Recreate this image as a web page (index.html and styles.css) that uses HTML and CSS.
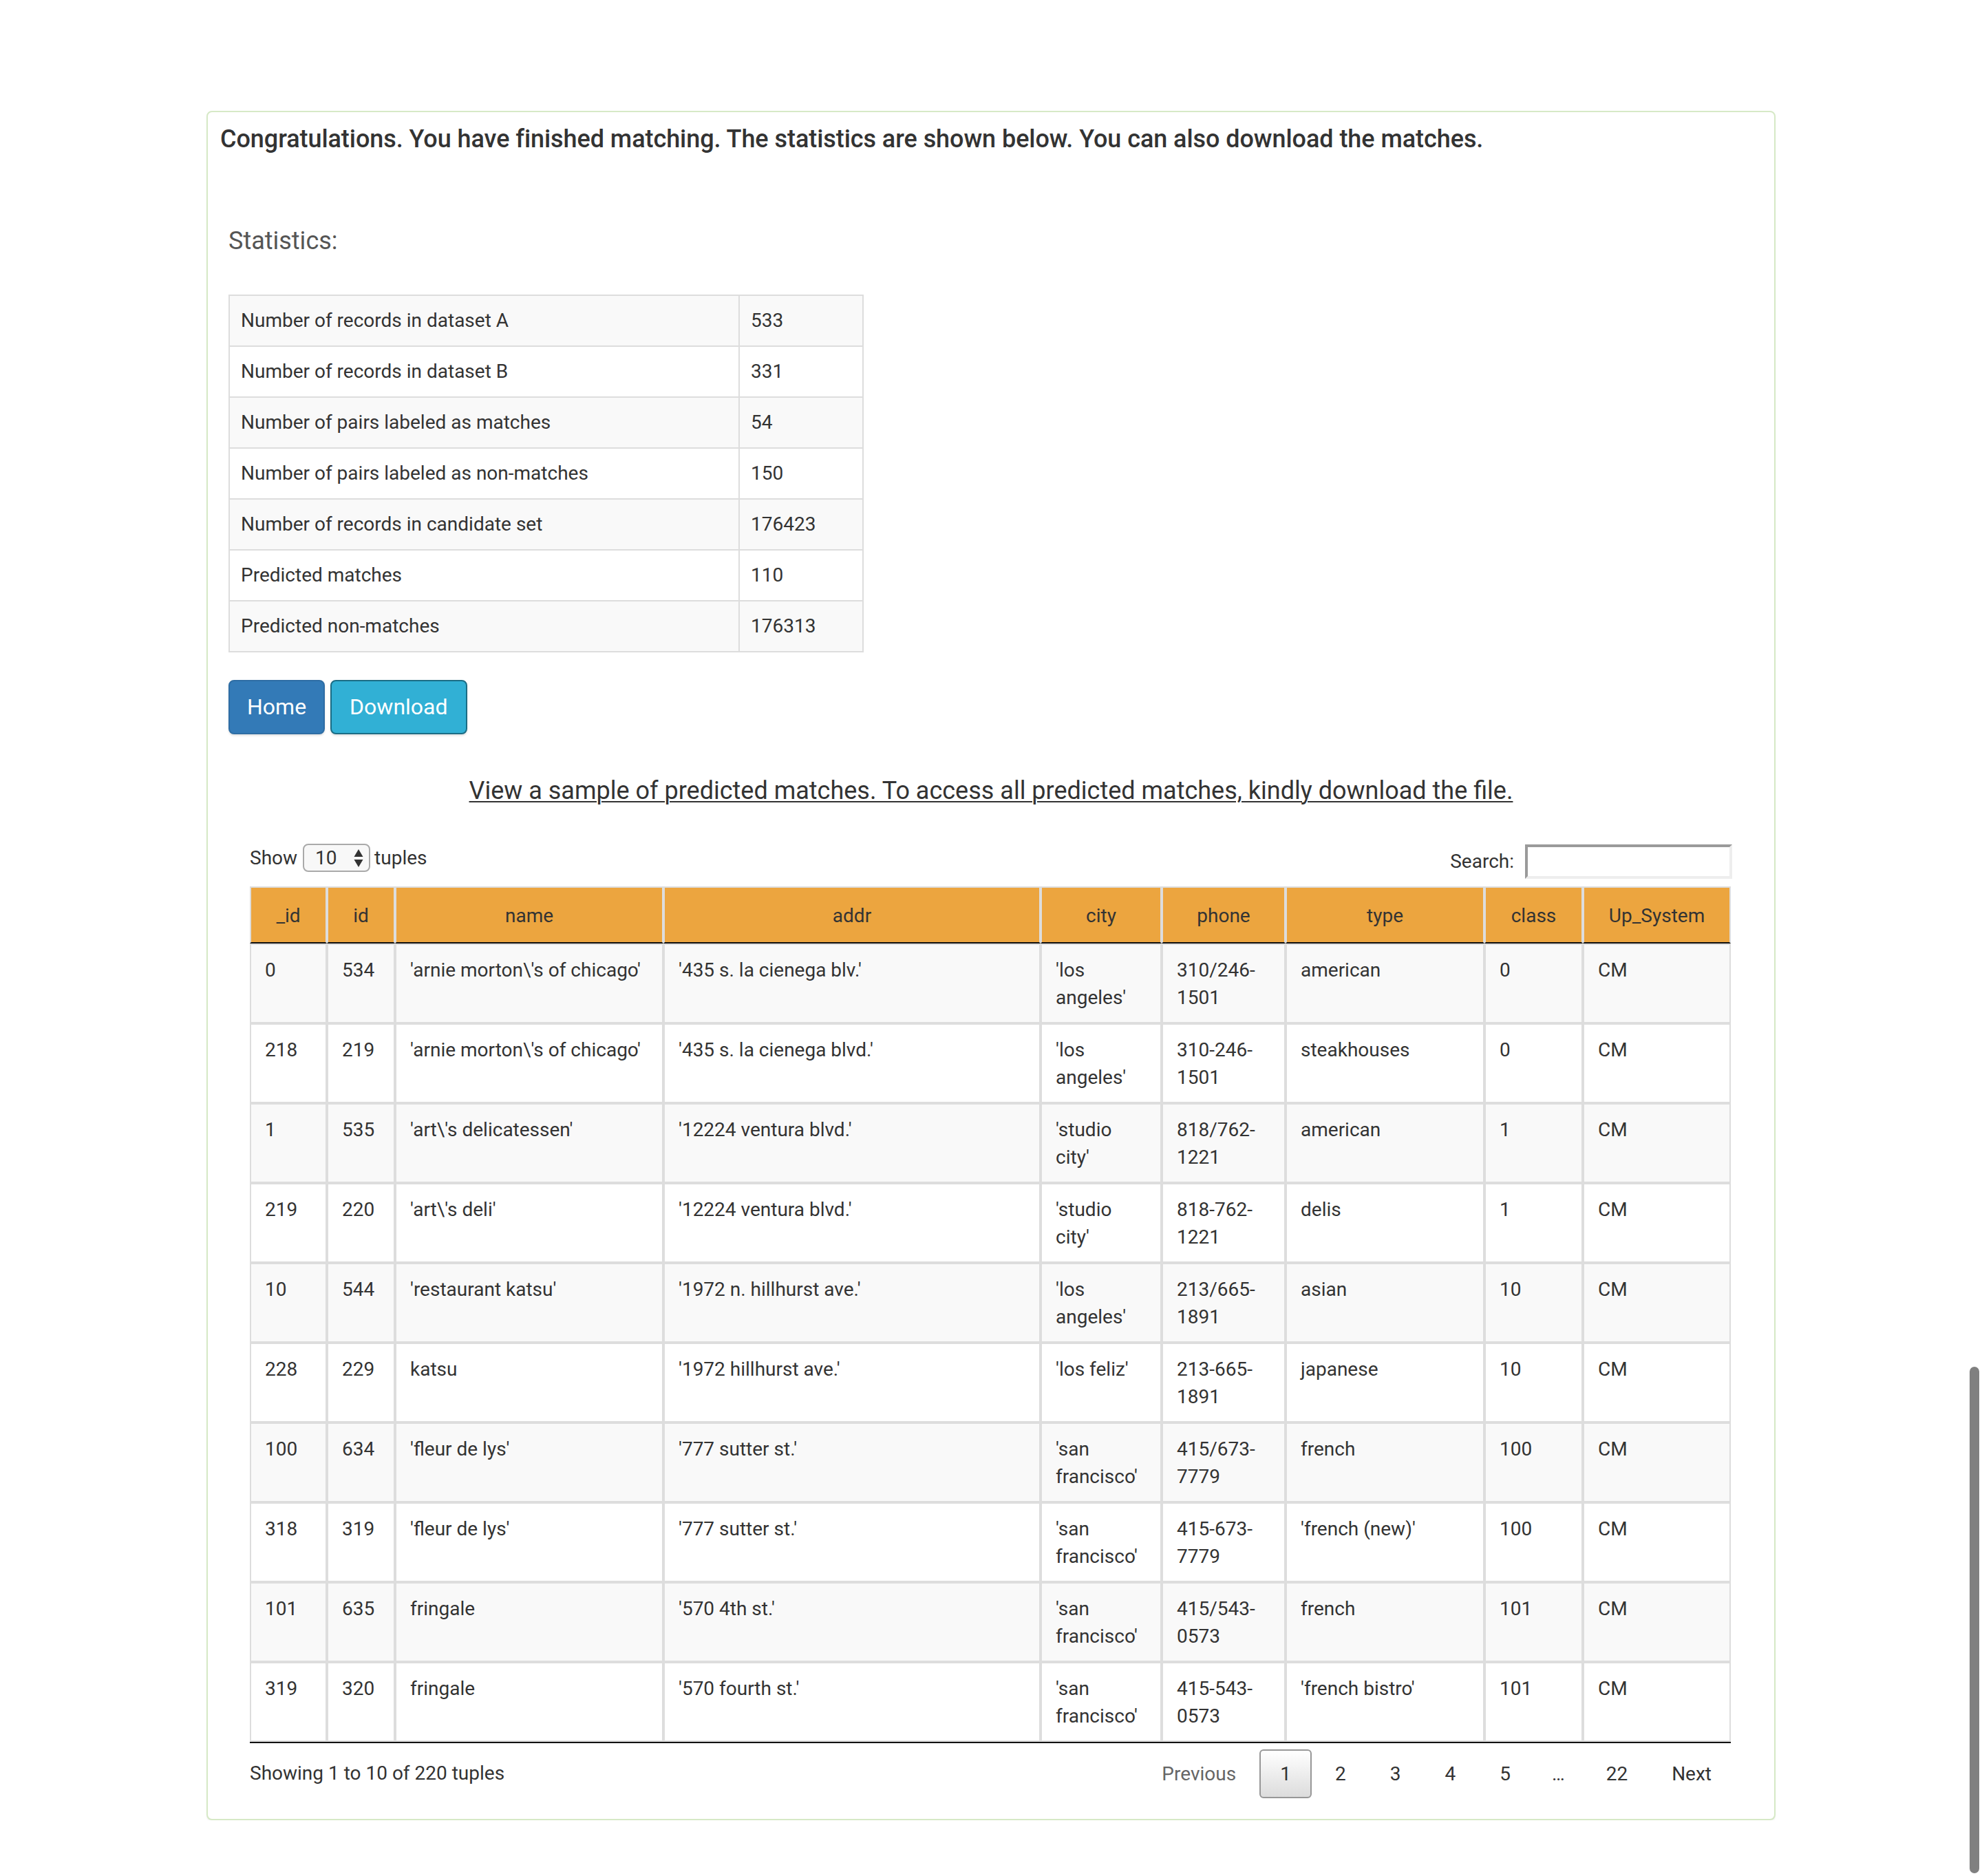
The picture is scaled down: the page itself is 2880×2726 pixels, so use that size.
FILE: index.html
```html
<!DOCTYPE html>
<html lang="en">
<head>
<meta charset="utf-8">
<title>Matching results</title>
<link rel="stylesheet" href="styles.css">
</head>
<body>
<div class="container">
  <div class="panel">
    <h4 class="congrats">Congratulations. You have finished matching. The statistics are shown below. You can also download the matches.</h4>
    <div class="panel-body">
      <h4 class="stats-title">Statistics:</h4>
      <table class="stats">
        <colgroup><col class="stats-c1"><col class="stats-c2"></colgroup>
        <tbody>
          <tr><td>Number of records in dataset A</td><td>533</td></tr>
          <tr><td>Number of records in dataset B</td><td>331</td></tr>
          <tr><td>Number of pairs labeled as matches</td><td>54</td></tr>
          <tr><td>Number of pairs labeled as non-matches</td><td>150</td></tr>
          <tr><td>Number of records in candidate set</td><td>176423</td></tr>
          <tr><td>Predicted matches</td><td>110</td></tr>
          <tr><td>Predicted non-matches</td><td>176313</td></tr>
        </tbody>
      </table>
      <div class="actions">
        <a class="btn btn-primary" href="#">Home</a>
        <a class="btn btn-info" href="#">Download</a>
      </div>
      <p class="sample"><a href="#">View a sample of predicted matches. To access all predicted matches, kindly download the file.</a></p>
      <div class="dt-wrapper">
        <div class="dt-top">
          <label class="dt-length">Show
            <span class="select-wrap">
              <select class="dt-select"><option>10</option><option>25</option><option>50</option><option>100</option></select>
              <svg class="select-arrows" width="14" height="28" viewBox="0 0 14 28"><path d="M7 1 L13.5 12 L0.5 12 Z" fill="#333"/><path d="M7 27 L13.5 16 L0.5 16 Z" fill="#333"/></svg>
            </span>
            tuples</label>
          <label class="dt-filter">Search:<input type="search" class="dt-search"></label>
        </div>
        <table class="data">
          <colgroup>
            <col class="w-uid"><col class="w-id"><col class="w-name"><col class="w-addr"><col class="w-city"><col class="w-phone"><col class="w-type"><col class="w-class"><col class="w-sys">
          </colgroup>
          <thead>
            <tr><th>_id</th><th>id</th><th>name</th><th>addr</th><th>city</th><th>phone</th><th>type</th><th>class</th><th>Up_System</th></tr>
          </thead>
          <tbody>
            <tr class="odd"><td>0</td><td>534</td><td>'arnie morton\'s of chicago'</td><td>'435 s. la cienega blv.'</td><td>'los angeles'</td><td>310/246-1501</td><td>american</td><td>0</td><td>CM</td></tr>
            <tr class="even"><td>218</td><td>219</td><td>'arnie morton\'s of chicago'</td><td>'435 s. la cienega blvd.'</td><td>'los angeles'</td><td>310-246-1501</td><td>steakhouses</td><td>0</td><td>CM</td></tr>
            <tr class="odd"><td>1</td><td>535</td><td>'art\'s delicatessen'</td><td>'12224 ventura blvd.'</td><td>'studio city'</td><td>818/762-1221</td><td>american</td><td>1</td><td>CM</td></tr>
            <tr class="even"><td>219</td><td>220</td><td>'art\'s deli'</td><td>'12224 ventura blvd.'</td><td>'studio city'</td><td>818-762-1221</td><td>delis</td><td>1</td><td>CM</td></tr>
            <tr class="odd"><td>10</td><td>544</td><td>'restaurant katsu'</td><td>'1972 n. hillhurst ave.'</td><td>'los angeles'</td><td>213/665-1891</td><td>asian</td><td>10</td><td>CM</td></tr>
            <tr class="even"><td>228</td><td>229</td><td>katsu</td><td>'1972 hillhurst ave.'</td><td>'los feliz'</td><td>213-665-1891</td><td>japanese</td><td>10</td><td>CM</td></tr>
            <tr class="odd"><td>100</td><td>634</td><td>'fleur de lys'</td><td>'777 sutter st.'</td><td>'san francisco'</td><td>415/673-7779</td><td>french</td><td>100</td><td>CM</td></tr>
            <tr class="even"><td>318</td><td>319</td><td>'fleur de lys'</td><td>'777 sutter st.'</td><td>'san francisco'</td><td>415-673-7779</td><td>'french (new)'</td><td>100</td><td>CM</td></tr>
            <tr class="odd"><td>101</td><td>635</td><td>fringale</td><td>'570 4th st.'</td><td>'san francisco'</td><td>415/543-0573</td><td>french</td><td>101</td><td>CM</td></tr>
            <tr class="even"><td>319</td><td>320</td><td>fringale</td><td>'570 fourth st.'</td><td>'san francisco'</td><td>415-543-0573</td><td>'french bistro'</td><td>101</td><td>CM</td></tr>
          </tbody>
        </table>
        <div class="dt-bottom">
          <div class="dt-info">Showing 1 to 10 of 220 tuples</div>
          <div class="dt-paginate">
            <a class="pg disabled" href="#">Previous</a>
            <a class="pg current" href="#">1</a>
            <a class="pg" href="#">2</a>
            <a class="pg" href="#">3</a>
            <a class="pg" href="#">4</a>
            <a class="pg" href="#">5</a>
            <span class="pg ellipsis">…</span>
            <a class="pg" href="#">22</a>
            <a class="pg" href="#">Next</a>
          </div>
        </div>
      </div>
    </div>
  </div>
</div>
<div class="scroll-thumb"></div>
</body>
</html>
```

FILE: styles.css
```css
* { box-sizing: border-box; }

html, body {
  margin: 0;
  padding: 0;
  background: #fff;
}

body {
  font-family: Roboto, "Liberation Sans", Arial, sans-serif;
  font-size: 28px;
  line-height: 40px;
  color: #333;
}

.container {
  width: 2340px;
  margin: 161px auto 0;
  padding: 0 30px;
}

.panel {
  border: 2px solid #d6e9c6;
  border-radius: 8px;
  background: #fff;
  box-shadow: 0 2px 2px rgba(0, 0, 0, 0.05);
}

.congrats {
  margin: 0;
  padding: 19px 18px 0;
  font-size: 36px;
  line-height: 40px;
  font-weight: 500;
  letter-spacing: -0.06px;
  color: #333;
}

.panel-body {
  padding: 0 30px 30px;
}

.stats-title {
  margin: 108px 0 0;
  font-size: 36px;
  line-height: 40px;
  font-weight: 400;
  color: #555;
}

/* statistics table */
.stats {
  margin-top: 58px;
  width: 921px;
  table-layout: fixed;
  border-collapse: collapse;
  border: 2px solid #ddd;
}

.stats-c1 { width: 741px; }
.stats-c2 { width: 180px; }

.stats td {
  border: 2px solid #ddd;
  padding: 16px 16px;
  line-height: 40px;
  vertical-align: top;
}

.stats tr:nth-child(odd) td { background: #f9f9f9; }

/* buttons */
.actions {
  margin-top: 40px;
  display: flex;
  gap: 8px;
}

.btn {
  display: inline-block;
  height: 79px;
  padding: 0 25px;
  border: 2px solid transparent;
  border-radius: 8px;
  font-size: 32px;
  line-height: 75px;
  color: #fff;
  text-decoration: none;
  box-shadow: 0 2px 3px rgba(0, 0, 0, 0.12);
}

.btn-primary {
  background: #337ab7;
  border-color: #2e6da4;
}

.btn-info {
  background: #31b0d5;
  border-color: #1b6d85;
  padding: 0 26px;
}

/* sample link */
.sample {
  margin: 60px 0 0;
  text-align: center;
  font-size: 36px;
  line-height: 44px;
}

.sample a {
  color: #333;
  text-decoration: underline;
  text-decoration-thickness: 2px;
  text-underline-offset: 3px;
}

/* datatable wrapper */
.dt-wrapper {
  margin: 55px 31px 0;
}

.dt-top {
  display: flex;
  justify-content: space-between;
  align-items: flex-start;
  height: 51px;
}

.dt-length {
  display: flex;
  align-items: center;
  height: 41px;
  font-size: 28px;
}

.select-wrap {
  position: relative;
  display: inline-block;
  margin: 0 6px 0 8px;
  height: 41px;
}

.dt-select {
  -webkit-appearance: none;
  appearance: none;
  width: 98px;
  height: 41px;
  padding: 0 0 0 16px;
  border: 2px solid #aaa;
  border-radius: 8px;
  background: #f8f8f8;
  font-family: Roboto, "Liberation Sans", Arial, sans-serif;
  font-size: 28px;
  color: #333;
}

.select-arrows {
  position: absolute;
  right: 10px;
  top: 7px;
  pointer-events: none;
}

.dt-filter {
  display: flex;
  align-items: center;
  margin-top: 1px;
  height: 50px;
  font-size: 28px;
}

.dt-search {
  margin-left: 16px;
  width: 301px;
  height: 50px;
  border-style: solid;
  border-width: 4px;
  border-color: #9a9a9a #eeeeee #eeeeee #9a9a9a;
  background: #fff;
  font-size: 28px;
  padding: 0 6px;
}

/* data table */
.data {
  margin-top: 11px;
  width: 2152px;
  table-layout: fixed;
  border-collapse: separate;
  border-spacing: 0;
  border-bottom: 2px solid #111;
}

.w-uid { width: 112px; }
.w-id { width: 99px; }
.w-name { width: 390px; }
.w-addr { width: 548px; }
.w-city { width: 176px; }
.w-phone { width: 180px; }
.w-type { width: 289px; }
.w-class { width: 143px; }
.w-sys { width: 215px; }

.data th {
  background: #eca53f;
  border: 2px solid #ddd;
  border-bottom: 2px solid #111;
  padding: 21px 18px 18px;
  font-weight: 400;
  line-height: 40px;
  text-align: center;
  color: #333;
}

.data td {
  border: 2px solid #ddd;
  padding: 17px 20px 15px;
  line-height: 40px;
  height: 116px;
  vertical-align: top;
  text-align: left;
}

.data tr.odd td { background: #f9f9f9; }
.data tr.even td { background: #fff; }

/* bottom bar */
.dt-bottom {
  margin-top: 9px;
  height: 71px;
  display: flex;
  justify-content: space-between;
  align-items: center;
}

.dt-info {
  font-size: 28px;
  margin-top: -1px;
}

.dt-paginate {
  display: flex;
  align-items: center;
}

.pg {
  display: inline-block;
  height: 71px;
  line-height: 67px;
  padding: 0 28px;
  margin-left: 4px;
  border: 2px solid transparent;
  border-radius: 6px;
  color: #333;
  text-decoration: none;
  font-size: 28px;
}

.pg.disabled { color: #666; }

.pg.current {
  border-color: #979797;
  background: linear-gradient(to bottom, #ffffff 0%, #dcdcdc 100%);
}

.pg.ellipsis {
  padding: 0 24px;
}

/* macOS overlay scrollbar thumb */
.scroll-thumb {
  position: fixed;
  right: 4px;
  top: 1986px;
  width: 14px;
  height: 736px;
  border-radius: 7px;
  background: #808080;
}
```
